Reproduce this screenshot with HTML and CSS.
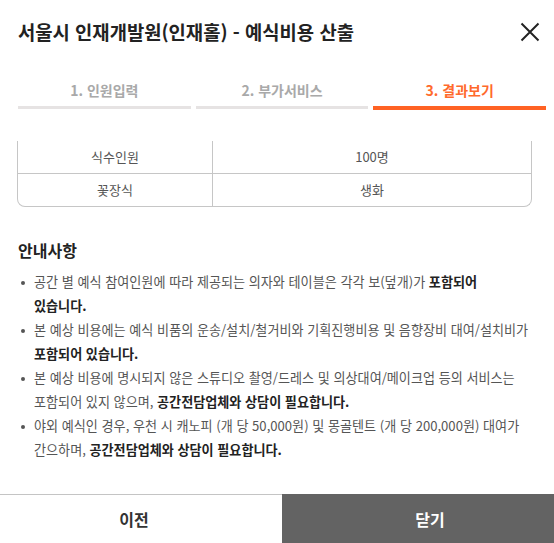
FILE: index.html
```html
<!DOCTYPE html>
<html lang="ko">
<head>
    <meta charset="UTF-8">
    <meta name="viewport" content="width=device-width, initial-scale=1.0">
    <title>예식비용 산출</title>
    <link rel="stylesheet" href="styles.css">
</head>
<body>
    <div class="modal">
        <div class="modal-head">
            <h2>서울시 인재개발원(인재홀) - 예식비용 산출</h2>
            <button class="close-btn" aria-label="닫기">
                <svg width="20" height="20" viewBox="0 0 20 20">
                    <path d="M1.5 1.5 L18.5 18.5 M18.5 1.5 L1.5 18.5" stroke="#222" stroke-width="2" fill="none"/>
                </svg>
            </button>
        </div>

        <div class="steps">
            <div class="step">1. 인원입력</div>
            <div class="step">2. 부가서비스</div>
            <div class="step active">3. 결과보기</div>
        </div>

        <div class="modal-body">
            <div class="result-table">
                <div class="result-row">
                    <div class="cell">식수인원</div>
                    <div class="cell">100명</div>
                </div>
                <div class="result-row">
                    <div class="cell">꽃장식</div>
                    <div class="cell">생화</div>
                </div>
            </div>

            <div class="notice">
                <h3>안내사항</h3>
                <ul>
                    <li>공간 별 예식 참여인원에 따라 제공되는 의자와 테이블은 각각 보(덮개)가 <b>포함되어 있습니다.</b></li>
                    <li>본 예상 비용에는 예식 비품의 운송/설치/철거비와 기획진행비용 및 음향장비 대여/설치비가 <b>포함되어 있습니다.</b></li>
                    <li>본 예상 비용에 명시되지 않은 스튜디오 촬영/드레스 및 의상대여/메이크업 등의 서비스는 포함되어 있지 않으며, <b>공간전담업체와 상담이 필요합니다.</b></li>
                    <li>야외 예식인 경우, 우천 시 캐노피 (개 당 50,000원) 및 몽골텐트 (개 당 200,000원) 대여가 간으하며, <b>공간전담업체와 상담이 필요합니다.</b></li>
                </ul>
            </div>
        </div>

        <div class="modal-foot">
            <button class="btn-prev">이전</button>
            <button class="btn-close">닫기</button>
        </div>
    </div>
</body>
</html>
```

FILE: styles.css
```css
* {
    box-sizing: border-box;
    margin: 0;
    padding: 0;
}

body {
    font-family: 'Noto Sans CJK KR', 'Noto Sans', sans-serif;
    color: #222;
    background-color: #fff;
}

.modal {
    width: 554px;
    height: 543px;
    display: flex;
    flex-direction: column;
    background-color: #fff;
}

.modal-head {
    display: flex;
    justify-content: space-between;
    align-items: center;
    padding: 19px 14px 0 18px;
}

.modal-head h2 {
    font-size: 18.8px;
    font-weight: bold;
    line-height: 26px;
    color: #222;
}

.close-btn {
    width: 20px;
    height: 20px;
    border: none;
    background: none;
    cursor: pointer;
}

.close-btn svg {
    display: block;
}

.steps {
    display: grid;
    grid-template-columns: repeat(3, 1fr);
    gap: 5px;
    margin-top: 35px;
    padding: 0 8px 0 18px;
}

.step {
    font-size: 14px;
    font-weight: bold;
    line-height: 20px;
    text-align: center;
    color: #a9a9a9;
    padding-bottom: 6px;
    position: relative;
    height: 30px;
}

.step::after {
    content: '';
    position: absolute;
    left: 0;
    right: 0;
    top: 26px;
    height: 3px;
    background-color: #e6e3e3;
}

.step.active {
    color: #ff6a2c;
}

.step.active::after {
    height: 4px;
    background-color: #ff6224;
}

.modal-body {
    flex: 1;
    padding: 31px 0 0 17px;
}

.result-table {
    width: 515px;
    border: 1px solid #c6c6c6;
    border-top: none;
    border-radius: 0 0 8px 8px;
}

.result-row {
    display: grid;
    grid-template-columns: 195px 1fr;
    border-bottom: 1px solid #c6c6c6;
}

.result-row:last-child {
    border-bottom: none;
}

.cell {
    height: 32px;
    line-height: 32px;
    text-align: center;
    font-size: 13px;
    color: #555;
}

.cell:first-child {
    border-right: 1px solid #c6c6c6;
}

.notice {
    margin-top: 32px;
}

.notice h3 {
    font-size: 16px;
    font-weight: bold;
    line-height: 22px;
    color: #222;
    padding-left: 1px;
}

.notice ul {
    list-style: none;
    margin-top: 9px;
    width: 514px;
}

.notice li {
    position: relative;
    padding-left: 17px;
    font-size: 13.1px;
    line-height: 24px;
    word-break: keep-all;
    color: #555;
}

.notice li::before {
    content: '';
    position: absolute;
    left: 4px;
    top: 11px;
    width: 4px;
    height: 4px;
    border-radius: 50%;
    background-color: #555;
}

.notice li b {
    color: #222;
}

.modal-foot {
    display: flex;
    height: 49px;
}

.modal-foot button {
    border: none;
    font-family: inherit;
    font-size: 16px;
    font-weight: bold;
    cursor: pointer;
}

.btn-prev {
    width: 282px;
    background-color: #fff;
    color: #333;
    border-top: 1px solid #c4c4c4 !important;
    padding-right: 14px;
}

.btn-close {
    flex: 1;
    background-color: #636363;
    color: #fff;
    padding-left: 24px;
}
```
